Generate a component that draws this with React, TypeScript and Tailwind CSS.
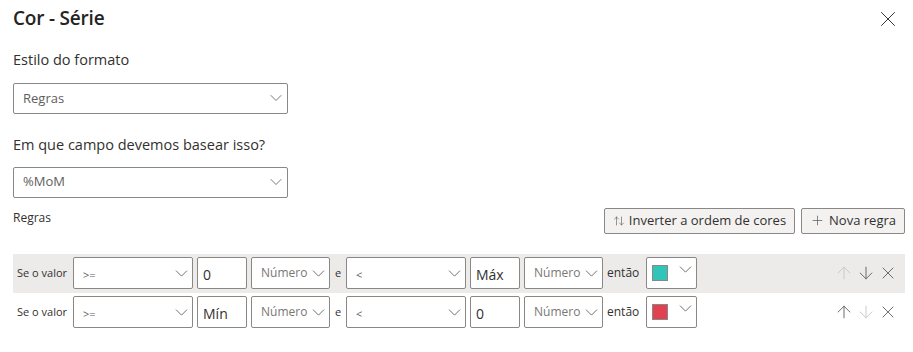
import { ChevronDown, X, ArrowUp, ArrowDown, Plus, ArrowUpDown } from "lucide-react";

interface Rule {
  op1: string;
  val1: string;
  op2: string;
  val2: string;
  color: string;
  shaded: boolean;
  upDisabled: boolean;
  downDisabled: boolean;
}

const rules: Rule[] = [
  { op1: ">=", val1: "0", op2: "<", val2: "Máx", color: "#30c5b8", shaded: true, upDisabled: true, downDisabled: false },
  { op1: ">=", val1: "Mín", op2: "<", val2: "0", color: "#e0434f", shaded: false, upDisabled: false, downDisabled: true },
];

const Dropdown = ({ value }: { value: string }) => (
  <div className="flex items-center justify-between w-[275px] h-[31px] border border-[#8a8886] rounded-[2px] bg-white pl-[9px] pr-[1px]">
    <span className="text-[13px] text-[#605e5c]">{value}</span>
    <ChevronDown className="w-[20px] h-[20px] text-[#605e5c]" strokeWidth={1} />
  </div>
);

const SmallSelect = ({ value, width, muted }: { value: string; width: string; muted?: boolean }) => (
  <div className={`flex items-center justify-between ${width} h-[32px] border border-[#8a8886] rounded-[2px] bg-white pl-[9px] pr-0 shrink-0`}>
    <span className={muted ? "text-[12px] text-[#797775]" : "text-[11px] text-[#605e5c] pt-[4px]"}>{value}</span>
    <ChevronDown className="w-[21px] h-[21px] text-[#605e5c]" strokeWidth={1} />
  </div>
);

const ValueInput = ({ value }: { value: string }) => (
  <div className="flex items-center w-[50px] h-[32px] border border-[#8a8886] rounded-[2px] bg-white pl-[5px] shrink-0">
    <span className="text-[14px] text-[#323130] pt-[2px]">{value}</span>
  </div>
);

const RuleRow = ({ rule }: { rule: Rule }) => (
  <div className={`flex items-center h-[39px] pl-[4px] pr-[7px] ${rule.shaded ? "bg-[#edebe9]" : "bg-white"}`}>
    <span className="text-[11px] text-[#323130] w-[56px] shrink-0">Se o valor</span>
    <div className="flex items-center gap-[4px]">
      <SmallSelect value={rule.op1} width="w-[120px]" />
      <ValueInput value={rule.val1} />
      <SmallSelect value="Número" width="w-[79px]" muted />
    </div>
    <span className="text-[11px] text-[#323130] w-[16px] text-center shrink-0">e</span>
    <div className="flex items-center gap-[4px]">
      <SmallSelect value={rule.op2} width="w-[120px]" />
      <ValueInput value={rule.val2} />
      <SmallSelect value="Número" width="w-[79px]" muted />
    </div>
    <span className="text-[12px] text-[#323130] ml-[4px] w-[39px] shrink-0">então</span>
    <div className="flex items-start justify-between w-[51px] h-[32px] border border-[#8a8886] rounded-[2px] bg-white pl-[5px] pr-0 pt-[7px] shrink-0">
      <div className="w-[16px] h-[16px] border border-[#8a8886]" style={{ backgroundColor: rule.color }} />
      <ChevronDown className="w-[21px] h-[21px] text-[#605e5c] -mt-[6px]" strokeWidth={1} />
    </div>
    <div className="flex items-center gap-[2px] ml-auto">
      <ArrowUp className={`w-[20px] h-[20px] ${rule.upDisabled ? "text-[#c8c6c4]" : "text-[#605e5c]"}`} strokeWidth={1.1} />
      <ArrowDown className={`w-[20px] h-[20px] ${rule.downDisabled ? "text-[#c8c6c4]" : "text-[#605e5c]"}`} strokeWidth={1.1} />
      <X className="w-[20px] h-[20px] text-[#605e5c]" strokeWidth={1.1} />
    </div>
  </div>
);

export default function App() {
  return (
    <div className="w-[913px] h-[352px] bg-white text-[#252423] pl-[13px] pr-[8px] pt-[5px]" style={{ fontFamily: '"Open Sans", "Noto Sans", sans-serif' }}>
      <div className="flex items-center justify-between h-[26px]">
        <h1 className="text-[19px] font-semibold tracking-[-0.2px]">Cor - Série</h1>
        <X className="w-[26px] h-[26px] text-[#323130] mr-[4px] mt-[1px]" strokeWidth={0.9} />
      </div>
      <div className="mt-[18px] text-[14.5px] text-[#323130]">Estilo do formato</div>
      <div className="mt-[12px]">
        <Dropdown value="Regras" />
      </div>
      <div className="mt-[20px] text-[14.5px] text-[#323130]">Em que campo devemos basear isso?</div>
      <div className="mt-[11px]">
        <Dropdown value="%MoM" />
      </div>
      <div className="flex items-start justify-between mt-[10px]">
        <span className="text-[12px] text-[#323130] mt-[1px]">Regras</span>
        <div className="flex gap-[6px]">
          <button className="flex items-center gap-[4px] h-[26px] px-[8px] border border-[#8a8886] rounded-[2px] bg-[#f3f2f1] text-[13px] text-[#323130]">
            <ArrowUpDown className="w-[12px] h-[12px] text-[#605e5c]" strokeWidth={1.3} />
            Inverter a ordem de cores
          </button>
          <button className="flex items-center gap-[4px] h-[26px] px-[8px] border border-[#8a8886] rounded-[2px] bg-[#f3f2f1] text-[13px] text-[#323130]">
            <Plus className="w-[15px] h-[15px] text-[#605e5c]" strokeWidth={1.2} />
            Nova regra
          </button>
        </div>
      </div>
      <div className="mt-[20px] w-[892px]">
        {rules.map((r, i) => (
          <RuleRow key={i} rule={r} />
        ))}
      </div>
    </div>
  );
}
